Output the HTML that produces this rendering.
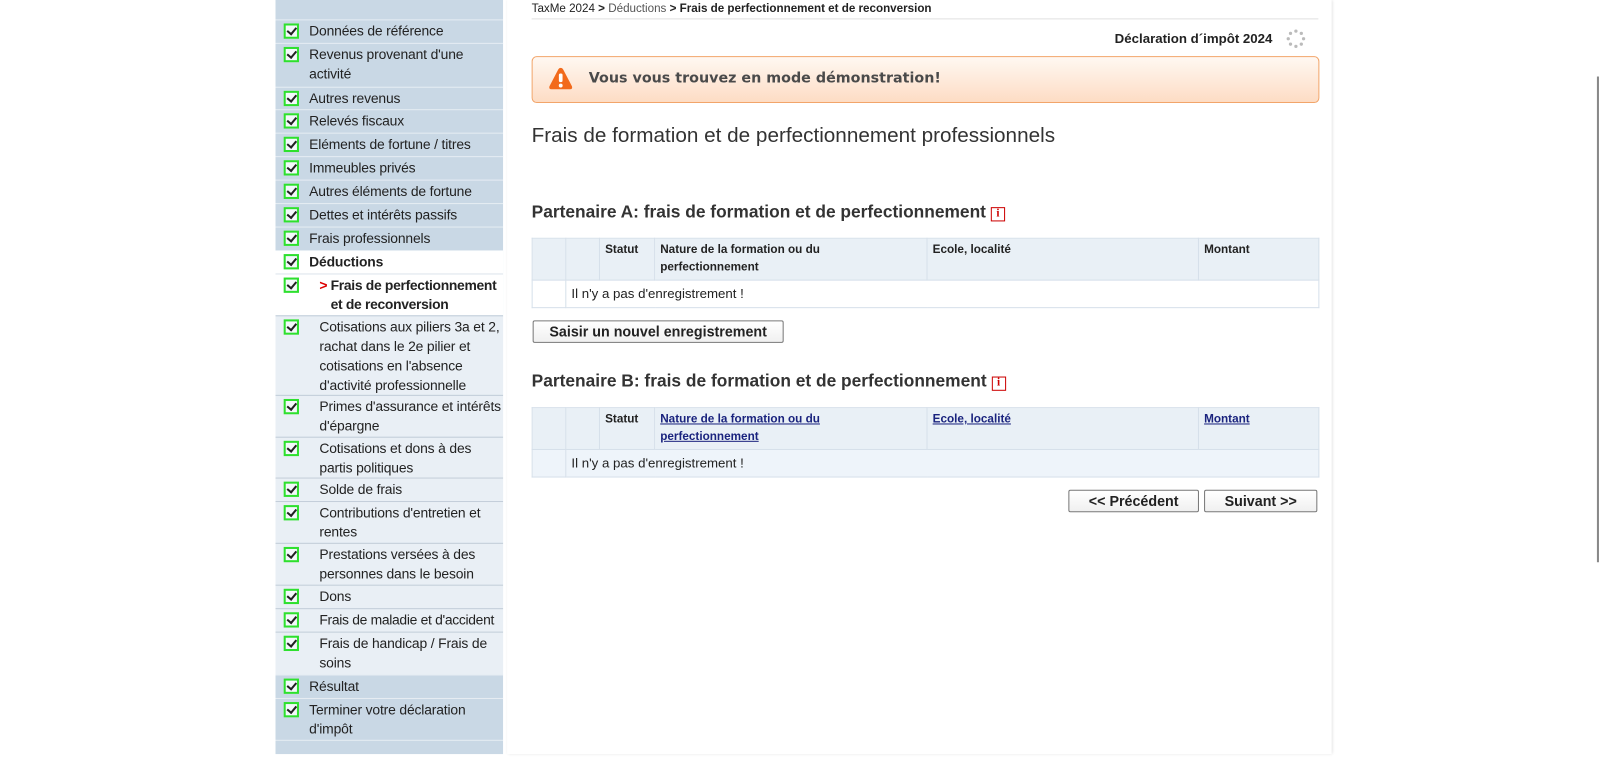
<!DOCTYPE html>
<html><head><meta charset="utf-8"><style>
*{margin:0;padding:0;box-sizing:border-box}
html,body{width:1600px;height:754px;overflow:hidden;background:#fff;font-family:"Liberation Sans",Arial,sans-serif;color:#222}
#w{position:absolute;left:0;top:0;width:1568px;height:739px;transform:scale(1.0204);transform-origin:0 0}
#side{position:absolute;left:270px;top:0;width:223px;height:739px;background:#c9d8e5}
.r{position:absolute;left:0;width:223px;font-size:13.6px;letter-spacing:-0.15px;line-height:19px;color:#222;border-top:1px solid #e6edf3}
.r .cb{position:absolute;left:8px;top:3px;width:15px;height:15px;border:2px solid #2ee02e;background:#f4f8fb}
.r .cb:after{content:"";position:absolute;left:3px;top:0px;width:4px;height:7px;border:solid #222;border-width:0 2px 2px 0;transform:rotate(40deg)}
.r .t{position:absolute;left:33px;top:1px;width:188px}
.sub{background:#e9eff5}
.sub .t{left:43px;width:178px}
.act{background:#fff}
#main{position:absolute;left:497px;top:0;width:808px;height:739px;background:#fff;box-shadow:1px 0 3px rgba(0,0,0,.15)}
.abs{position:absolute}
table{border-collapse:collapse;position:absolute;left:521px;width:772px;font-size:11px;table-layout:fixed}
td{border:1px solid #d6e0ea;vertical-align:top;padding:3px 5px}
th{border:1px solid #d6e0ea;background:#e9f0f6;text-align:left;vertical-align:top;padding:3px 5px;font-weight:bold;font-size:11.5px;line-height:17px}
.btn{position:absolute;border:1px solid #777;border-radius:2px;background:linear-gradient(#fff,#f0f0f0);font-weight:bold;font-size:14px;text-align:center;line-height:20px;color:#222}
a{color:#1a237e}
.info{display:inline-block;width:14px;height:14px;border:1.5px solid #c00;color:#c00;font-size:11px;line-height:11px;text-align:center;font-family:"Liberation Serif",serif;font-weight:bold;vertical-align:1px;margin-left:0px}
</style></head><body><div id="w">
<div id="side">
<div class="r" style="top:-1px;height:21px;border-top:none"></div>
<div class="r" style="top:19px;height:23px"><span class="cb"></span><span class="t">Données de référence</span></div>
<div class="r" style="top:42px;height:43px"><span class="cb"></span><span class="t">Revenus provenant d'une activité</span></div>
<div class="r" style="top:85px;height:22px"><span class="cb"></span><span class="t">Autres revenus</span></div>
<div class="r" style="top:107px;height:23px"><span class="cb"></span><span class="t">Relevés fiscaux</span></div>
<div class="r" style="top:130px;height:23px"><span class="cb"></span><span class="t">Eléments de fortune / titres</span></div>
<div class="r" style="top:153px;height:23px"><span class="cb"></span><span class="t">Immeubles privés</span></div>
<div class="r" style="top:176px;height:23px"><span class="cb"></span><span class="t">Autres éléments de fortune</span></div>
<div class="r" style="top:199px;height:23px"><span class="cb"></span><span class="t">Dettes et intérêts passifs</span></div>
<div class="r" style="top:222px;height:23px"><span class="cb"></span><span class="t">Frais professionnels</span></div>
<div class="r act" style="top:245px;height:23px"><span class="cb"></span><span class="t" style="font-weight:bold">Déductions</span></div>
<div class="r act" style="top:268px;height:41px;border-top-color:#dde5ec"><span class="cb"></span><span class="t" style="left:43px;font-weight:bold;letter-spacing:-0.3px"><span style="color:#d00;position:absolute;left:0">&gt;</span><span style="position:absolute;left:11px;width:175px">Frais de perfectionnement et de reconversion</span></span></div>
<div class="r sub" style="top:309px;height:78px;border-top-color:#c3ced9"><span class="cb"></span><span class="t">Cotisations aux piliers 3a et 2, rachat dans le 2e pilier et cotisations en l'absence d'activité professionnelle</span></div>
<div class="r sub" style="top:387px;height:41px;border-top-color:#c3ced9"><span class="cb"></span><span class="t">Primes d'assurance et intérêts d'épargne</span></div>
<div class="r sub" style="top:428px;height:40px;border-top-color:#c3ced9"><span class="cb"></span><span class="t">Cotisations et dons à des partis politiques</span></div>
<div class="r sub" style="top:468px;height:23px;border-top-color:#c3ced9"><span class="cb"></span><span class="t">Solde de frais</span></div>
<div class="r sub" style="top:491px;height:41px;border-top-color:#c3ced9"><span class="cb"></span><span class="t">Contributions d'entretien et rentes</span></div>
<div class="r sub" style="top:532px;height:41px;border-top-color:#c3ced9"><span class="cb"></span><span class="t">Prestations versées à des personnes dans le besoin</span></div>
<div class="r sub" style="top:573px;height:23px;border-top-color:#c3ced9"><span class="cb"></span><span class="t">Dons</span></div>
<div class="r sub" style="top:596px;height:23px;border-top-color:#c3ced9"><span class="cb"></span><span class="t" style="white-space:nowrap;letter-spacing:-0.3px">Frais de maladie et d'accident</span></div>
<div class="r sub" style="top:619px;height:42px;border-top-color:#c3ced9"><span class="cb"></span><span class="t">Frais de handicap / Frais de soins</span></div>
<div class="r" style="top:661px;height:23px"><span class="cb"></span><span class="t">Résultat</span></div>
<div class="r" style="top:684px;height:41px"><span class="cb"></span><span class="t">Terminer votre déclaration d'impôt</span></div>
<div class="r" style="top:725px;height:20px"></div>
</div>
<div id="main"></div>
<div class="abs" style="left:521px;top:2px;font-size:11.4px;line-height:14px;color:#222">TaxMe 2024 <b>&gt;</b> <span style="color:#555">Déductions</span> <b>&gt; Frais de perfectionnement et de reconversion</b></div>
<div class="abs" style="left:521px;top:18px;width:771px;height:1px;background:#e0e0e0"></div>
<div class="abs" style="left:1040px;top:30px;width:207px;text-align:right;font-size:13px;font-weight:bold;line-height:16px">Déclaration d´impôt 2024</div>
<svg class="abs" style="left:1260px;top:28px" width="20" height="20" viewBox="0 0 20 20"><g fill="#bbb"><circle cx="10" cy="2.5" r="1.6"/><circle cx="15.3" cy="4.7" r="1.6"/><circle cx="17.5" cy="10" r="1.6"/><circle cx="15.3" cy="15.3" r="1.6"/><circle cx="10" cy="17.5" r="1.6"/><circle cx="4.7" cy="15.3" r="1.6"/><circle cx="2.5" cy="10" r="1.6"/><circle cx="4.7" cy="4.7" r="1.6"/></g></svg>
<div class="abs" style="left:521px;top:55px;width:772px;height:46px;border:1px solid #f2a56a;border-radius:5px;background:linear-gradient(#fff8f2,#fddcc4)"></div>
<svg class="abs" style="left:537px;top:65px" width="25" height="24" viewBox="0 0 25 24"><path d="M12.5 1.5 Q14 1.5 15 3.2 L23.5 19.5 Q24.5 22.5 21.5 22.5 L3.5 22.5 Q0.5 22.5 1.5 19.5 L10 3.2 Q11 1.5 12.5 1.5Z" fill="#f26a1b"/><rect x="10.7" y="7" width="3.6" height="8.5" rx="1.6" fill="#fff"/><circle cx="12.5" cy="18.8" r="1.9" fill="#fff"/></svg>
<div class="abs" style="left:577px;top:69px;font-family:'DejaVu Sans',sans-serif;font-weight:bold;font-size:14px;color:#4a4a4a;line-height:17px">Vous vous trouvez en mode démonstration!</div>
<div class="abs" style="left:521px;top:121px;font-size:20.3px;color:#333;line-height:24px">Frais de formation et de perfectionnement professionnels</div>
<div class="abs" style="left:521px;top:198px;font-size:17px;font-weight:bold;color:#333;line-height:20px">Partenaire A: frais de formation et de perfectionnement <span class="info">i</span></div>
<table style="top:233px">
<colgroup><col style="width:33px"><col style="width:33px"><col style="width:54px"><col style="width:267px"><col style="width:266px"><col></colgroup>
<tr style="height:40px"><th></th><th></th><th>Statut</th><th style="padding-right:90px">Nature de la formation ou du perfectionnement</th><th>Ecole, localité</th><th>Montant</th></tr>
<tr style="height:27px"><td></td><td colspan="5" style="font-size:13px;padding-top:5px">Il n'y a pas d'enregistrement !</td></tr>
</table>
<div class="btn" style="left:522px;top:314px;width:246px;height:22px">Saisir un nouvel enregistrement</div>
<div class="abs" style="left:521px;top:364px;font-size:17px;font-weight:bold;color:#333;line-height:20px">Partenaire B: frais de formation et de perfectionnement <span class="info">i</span></div>
<table style="top:399px">
<colgroup><col style="width:33px"><col style="width:33px"><col style="width:54px"><col style="width:267px"><col style="width:266px"><col></colgroup>
<tr style="height:41px"><th></th><th></th><th>Statut</th><th style="padding-right:90px"><a href="#">Nature de la formation ou du perfectionnement</a></th><th><a href="#">Ecole, localité</a></th><th><a href="#">Montant</a></th></tr>
<tr style="height:27px;background:#eef4fa"><td></td><td colspan="5" style="font-size:13px;padding-top:5px">Il n'y a pas d'enregistrement !</td></tr>
</table>
<div class="btn" style="left:1047px;top:480px;width:128px;height:22px">&lt;&lt; Précédent</div>
<div class="btn" style="left:1180px;top:480px;width:111px;height:22px">Suivant &gt;&gt;</div>
<div class="abs" style="left:1565px;top:75px;width:2px;height:476px;background:#888"></div>
</div></body></html>
